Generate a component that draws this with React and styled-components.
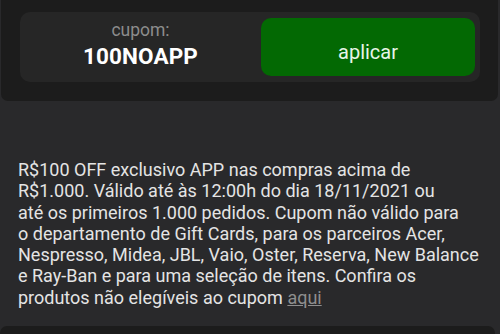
import React from "react";
import styled, { createGlobalStyle } from "styled-components";

const Global = createGlobalStyle`
  html, body { margin: 0; padding: 0; background: #29292b; }
  body { font-family: Roboto, "Noto Sans", Arial, sans-serif; overflow: hidden; }
`;

const Page = styled.div`
  width: 500px;
  height: 334px;
  display: flex;
  flex-direction: column;
  background: #29292b;
`;

const CouponPanel = styled.div`
  height: 101px;
  box-sizing: border-box;
  margin: 0 2px 0 1px;
  padding: 12px 18px 19px 19px;
  background: #1c1c1c;
  border-radius: 0 0 7px 7px;
`;

const InputBox = styled.div`
  height: 70px;
  box-sizing: border-box;
  display: flex;
  align-items: stretch;
  padding: 6px 5px 6px 0;
  background: #262626;
  border-radius: 10px;
`;

const CodeField = styled.div`
  flex: 1;
  display: flex;
  flex-direction: column;
  align-items: center;
  justify-content: center;
  padding-bottom: 2px;
`;

const Label = styled.div`
  color: #8c8c8c;
  font-size: 17.5px;
  line-height: 20px;
  margin-bottom: 3px;
  margin-top: -4px;
`;

const Code = styled.div`
  color: #ffffff;
  font-weight: 700;
  font-size: 22.5px;
  line-height: 26px;
  letter-spacing: 0.1px;
`;

const ApplyButton = styled.button`
  width: 214px;
  border: none;
  border-radius: 10px;
  background: #036903;
  color: #e8f5e8;
  font-family: Roboto, "Noto Sans", Arial, sans-serif;
  font-size: 20px;
  padding: 9px 0 0;
  cursor: pointer;
`;

const Terms = styled.p`
  margin: 58px 0 0;
  padding: 0 10px 0 18px;
  color: #e4e4e4;
  font-size: 18px;
  line-height: 21.3px;
  white-space: nowrap;
`;

const Link = styled.a`
  color: #8e8e8e;
  text-decoration: underline;
`;

const BottomPanel = styled.div`
  margin: auto 5px 0 0;
  height: 8px;
  background: #1c1c1c;
  border-radius: 7px 7px 0 0;
`;

export default function App() {
  return (
    <Page>
      <Global />
      <CouponPanel>
        <InputBox>
          <CodeField>
            <Label>cupom:</Label>
            <Code>100NOAPP</Code>
          </CodeField>
          <ApplyButton>aplicar</ApplyButton>
        </InputBox>
      </CouponPanel>
      <Terms>
        R$100 OFF exclusivo APP nas compras acima de
        <br />
        R$1.000. Válido até às 12:00h do dia 18/11/2021 ou
        <br />
        até os primeiros 1.000 pedidos. Cupom não válido para
        <br />
        o departamento de Gift Cards, para os parceiros Acer,
        <br />
        Nespresso, Midea, JBL, Vaio, Oster, Reserva, New Balance
        <br />
        e Ray-Ban e para uma seleção de itens. Confira os
        <br />
        produtos não elegíveis ao cupom <Link>aqui</Link>
      </Terms>
      <BottomPanel />
    </Page>
  );
}
